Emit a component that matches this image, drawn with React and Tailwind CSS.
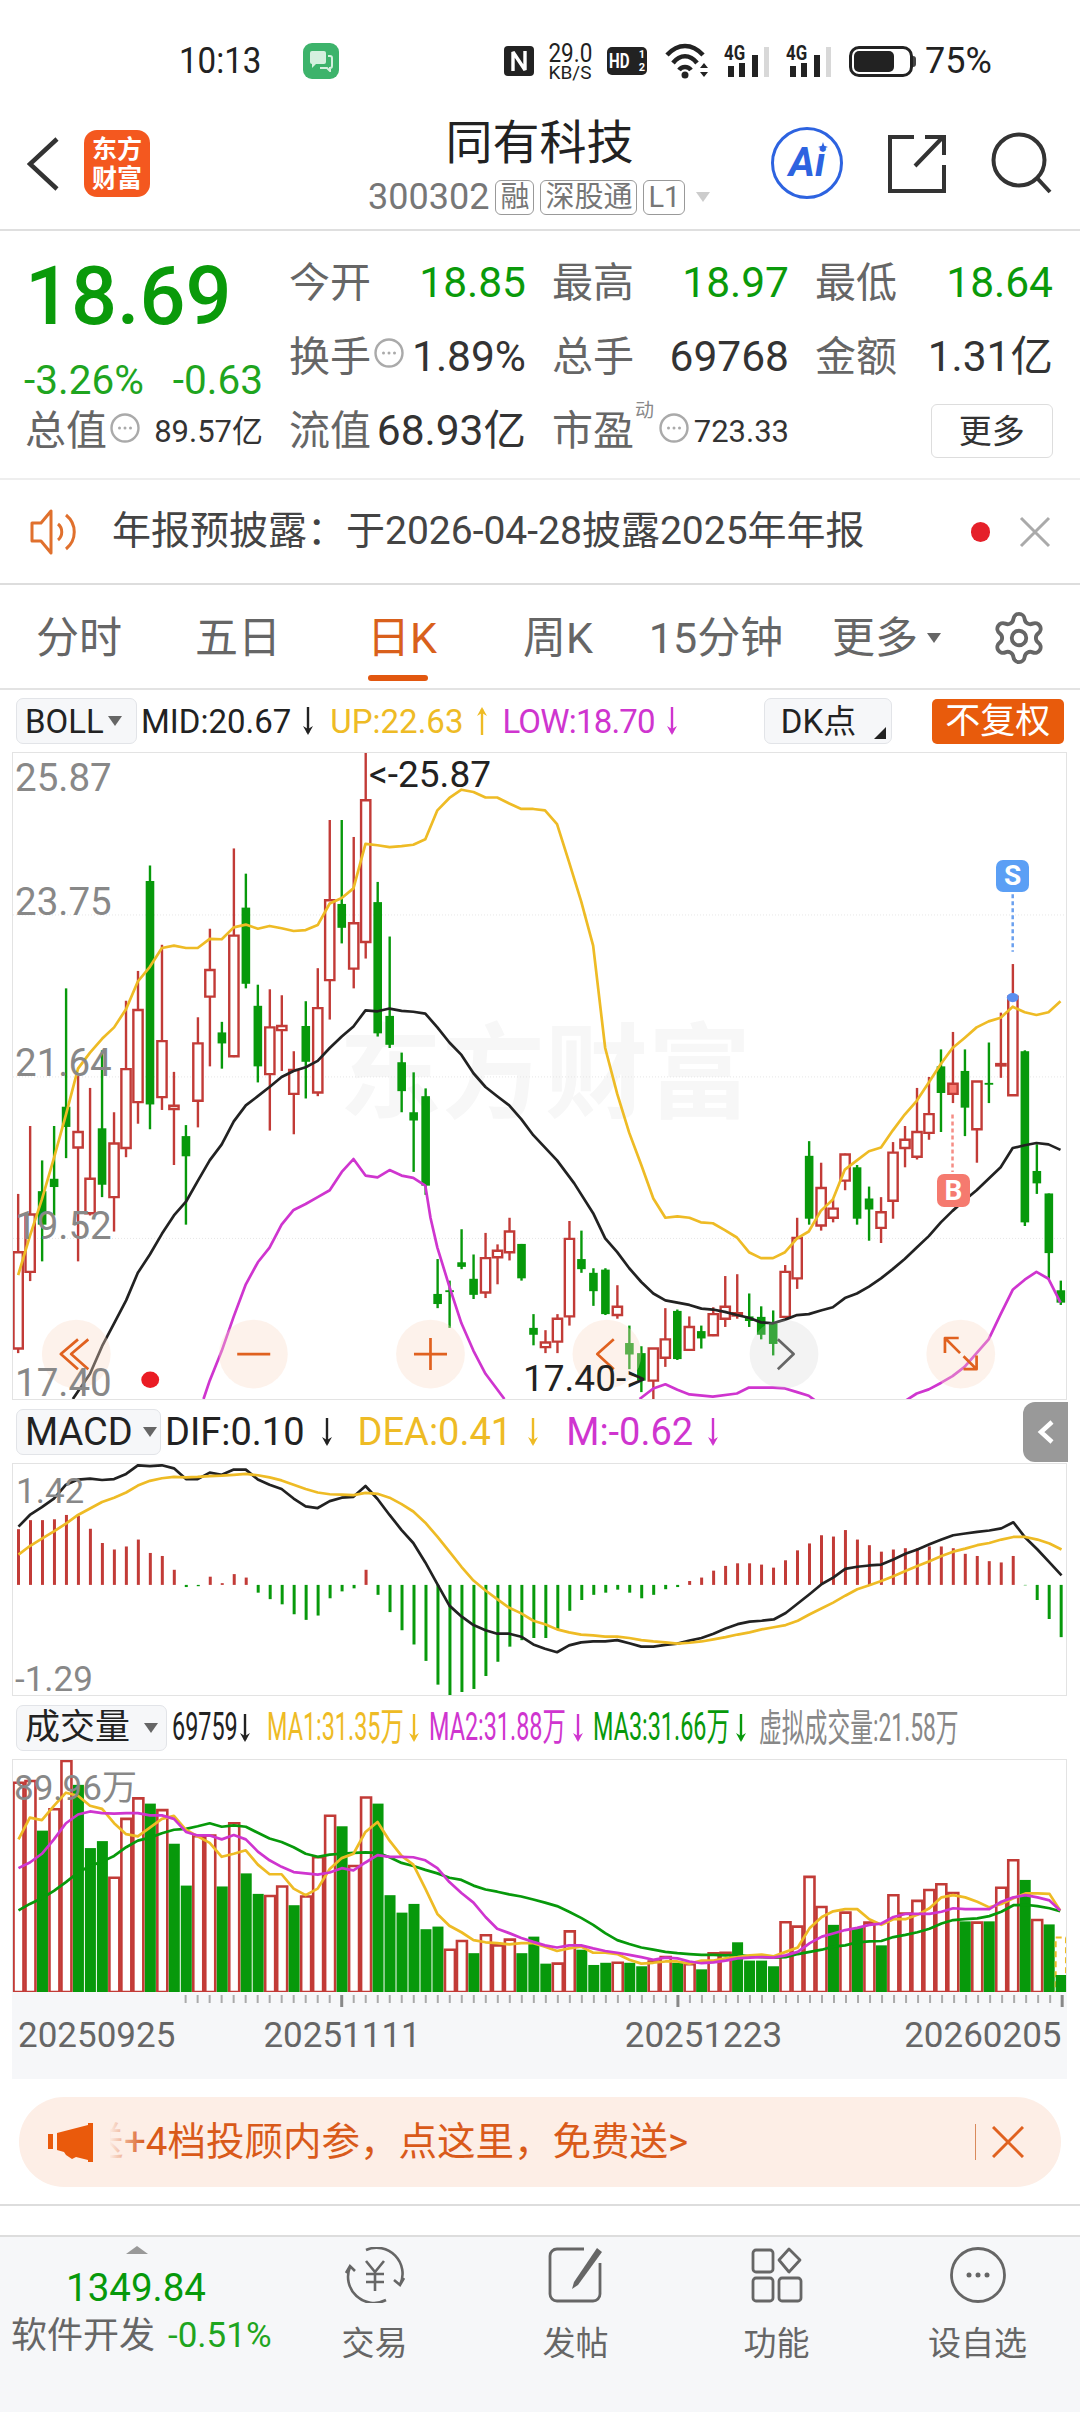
import React from 'react';
import { Settings } from 'lucide-react';

const GREEN = '#07990b';
const RED = '#c23b37';
const GOLD = '#eebb25';
const PINK = '#cf35cf';

// wick top, wick bottom, body top, body bottom, colour (y values measured on the chart)
const candles = [
  [1098, 1445, 1225, 1435, 'r'], [950, 1288, 1143, 1268, 'r'], [1025, 1245, 1092, 1165, 'g'], [950, 1145, 1065, 1083, 'g'],
  [650, 1020, 908, 952, 'g'], [840, 1245, 963, 997, 'r'], [867, 1145, 1065, 1140, 'r'], [785, 1105, 955, 1078, 'g'],
  [920, 1180, 988, 1105, 'r'], [677, 1018, 826, 998, 'r'], [612, 945, 697, 898, 'r'], [382, 957, 416, 903, 'g'],
  [555, 915, 765, 887, 'r'], [832, 1035, 906, 913, 'r'], [948, 1165, 972, 1016, 'g'], [713, 953, 770, 895, 'r'],
  [520, 820, 610, 668, 'r'], [723, 825, 746, 770, 'g'], [345, 800, 535, 798, 'r'], [400, 650, 474, 640, 'g'],
  [642, 855, 688, 820, 'g'], [652, 960, 735, 837, 'r'], [665, 830, 732, 741, 'r'], [787, 968, 828, 880, 'r'],
  [678, 890, 732, 810, 'g'], [606, 885, 693, 877, 'r'], [283, 718, 458, 632, 'r'], [283, 552, 466, 518, 'g'],
  [320, 650, 508, 607, 'r'], [137, 585, 240, 549, 'r'], [418, 755, 462, 748, 'g'], [537, 780, 710, 773, 'g'],
  [790, 920, 811, 874, 'g'], [833, 1050, 920, 938, 'g'], [868, 1100, 885, 1080, 'g'], [1240, 1347, 1316, 1338, 'g'],
  [1287, 1390, 1308, 1312, 'g'], [1175, 1262, 1247, 1257, 'g'], [1230, 1327, 1283, 1318, 'g'], [1183, 1325, 1238, 1313, 'r'],
  [1208, 1295, 1222, 1236, 'r'], [1150, 1243, 1180, 1225, 'r'], [1207, 1287, 1207, 1282, 'g'], [1360, 1428, 1390, 1405, 'g'],
  [1395, 1445, 1422, 1432, 'r'], [1360, 1445, 1370, 1420, 'r'], [1157, 1385, 1196, 1365, 'r'], [1178, 1270, 1240, 1262, 'g'],
  [1260, 1342, 1270, 1310, 'g'], [1260, 1362, 1263, 1360, 'g'], [1297, 1370, 1344, 1362, 'r'], [1385, 1480, 1423, 1448, 'g'],
  [1430, 1530, 1445, 1505, 'g'], [1435, 1545, 1435, 1505, 'r'], [1347, 1475, 1415, 1455, 'r'], [1350, 1460, 1353, 1458, 'g'],
  [1365, 1440, 1388, 1438, 'r'], [1385, 1435, 1397, 1413, 'g'], [1345, 1408, 1360, 1406, 'r'], [1277, 1388, 1344, 1370, 'r'],
  [1273, 1370, 1358, 1363, 'r'], [1315, 1388, 1365, 1375, 'g'], [1343, 1415, 1366, 1405, 'g'], [1352, 1450, 1380, 1425, 'g'],
  [1253, 1368, 1268, 1366, 'r'], [1150, 1305, 1194, 1282, 'r'], [983, 1165, 1015, 1152, 'g'], [1030, 1178, 1085, 1167, 'r'],
  [1110, 1160, 1130, 1150, 'r'], [1010, 1090, 1012, 1069, 'r'], [1035, 1165, 1040, 1152, 'g'], [1082, 1200, 1108, 1132, 'g'],
  [1105, 1205, 1138, 1172, 'r'], [985, 1152, 1008, 1113, 'r'], [950, 1040, 980, 998, 'r'], [867, 1023, 963, 1017, 'r'],
  [843, 980, 924, 965, 'r'], [783, 963, 820, 878, 'g'], [745, 900, 858, 880, 'b'], [783, 972, 830, 910, 'g'],
  [853, 1030, 853, 957, 'r'], [768, 900, 856, 860, 'g'], [703, 845, 815, 818, 'r'], [597, 883, 668, 883, 'r'],
  [785, 1168, 787, 1160, 'g'], [990, 1098, 1048, 1075, 'g'], [1097, 1285, 1097, 1227, 'g'], [1287, 1340, 1308, 1335, 'g'],
];

const bollUp = 'M51 1275L85 1190L120 1110L155 1020L190 925L225 825L260 790L295 760L330 735L365 695L399 635L434 603L469 562L504 557L539 562L573 562L608 542L643 543L678 517L713 511L748 520L782 514L817 519L852 525L887 523L922 512L957 465L992 453L1026 432L1061 335L1096 338L1131 342L1166 340L1200 337L1235 325L1270 262L1305 235L1340 217L1375 222L1410 234L1444 234L1479 247L1514 259L1549 259L1583 262L1618 292L1653 375L1688 460L1723 557L1758 780L1793 880L1828 965L1863 1035L1898 1108L1933 1150L1968 1147L2003 1150L2036 1160L2071 1162L2106 1177L2141 1193L2176 1225L2211 1238L2246 1238L2281 1225L2316 1195L2350 1180L2385 1135L2420 1110L2455 1045L2490 1025L2525 1005L2560 997L2594 960L2629 925L2664 895L2699 855L2734 815L2768 780L2803 758L2838 735L2873 722L2908 714L2943 690L2978 702L3012 708L3047 702L3082 678';
const bollMid = 'M210 1545L260 1490L295 1430L330 1380L365 1330L399 1270L434 1230L469 1185L504 1145L539 1115L573 1070L608 1025L643 990L678 940L713 905L748 885L782 865L817 843L852 830L887 822L922 808L957 780L992 755L1026 733L1061 698L1096 700L1131 694L1166 699L1200 701L1235 705L1270 735L1305 768L1340 795L1375 835L1410 865L1444 885L1479 905L1514 935L1549 970L1618 1025L1668 1075L1723 1140L1758 1195L1793 1225L1828 1260L1863 1290L1898 1315L1933 1330L2003 1340L2038 1348L2071 1350L2106 1355L2141 1362L2176 1368L2211 1378L2246 1380L2281 1372L2316 1362L2350 1360L2385 1352L2420 1345L2455 1325L2490 1315L2525 1300L2560 1282L2594 1262L2629 1240L2664 1215L2699 1190L2734 1160L2768 1135L2803 1112L2838 1090L2873 1065L2908 1040L2943 998L2978 992L3012 987L3047 990L3082 1002';
const bollLow = 'M590 1545L608 1505L643 1440L678 1365L713 1295L748 1247L782 1215L817 1165L852 1133L887 1120L922 1105L957 1090L992 1050L1026 1022L1061 1058L1096 1062L1131 1046L1166 1058L1200 1063L1235 1080L1250 1150L1270 1215L1305 1300L1340 1380L1375 1440L1410 1490L1465 1545M1858 1545L1898 1522L1933 1513L1968 1525L2003 1535L2071 1540L2141 1533L2176 1520L2246 1520L2281 1522L2316 1530L2350 1538L2368 1548M2633 1548L2664 1533L2699 1524L2734 1510L2768 1495L2803 1475L2838 1445L2873 1415L2908 1360L2943 1307L2978 1285L3012 1268L3047 1283L3082 1335';

const macdBars = [298, 277, 277, 275, 265, 267, 297, 330, 345, 338, 322, 353, 360, 392, 432, 430, 408, 423, 402, 410, 445, 460, 472, 495, 508, 498, 458, 442, 435, 392, 450, 490, 532, 565, 603, 658, 682, 675, 668, 638, 605, 570, 555, 550, 550, 530, 487, 462, 450, 445, 438, 445, 458, 450, 437, 432, 418, 410, 394, 383, 377, 377, 380, 387, 370, 347, 331, 312, 315, 300, 322, 335, 350, 345, 342, 342, 338, 338, 342, 355, 360, 372, 375, 360, 428, 462, 506, 548];
const macdDif = 'M52 292L85 265L120 247L155 227L190 195L225 183L260 181L295 184L330 182L365 170L399 150L434 152L469 150L504 157L539 182L573 182L608 167L643 172L678 160L713 160L748 183L782 195L817 205L852 227L887 245L922 249L957 233L992 225L1026 223L1061 198L1096 228L1131 265L1166 300L1200 330L1235 375L1270 425L1305 475L1340 500L1375 520L1410 532L1444 540L1479 540L1514 547L1549 565L1583 575L1618 583L1653 567L1688 560L1723 558L1758 558L1793 555L1828 562L1863 570L1898 570L1933 566L1968 563L2003 556L2038 550L2073 540L2108 528L2143 518L2178 512L2213 510L2248 507L2283 492L2318 470L2353 448L2388 425L2421 410L2456 390L2491 385L2526 382L2561 380L2596 368L2631 355L2666 345L2701 333L2736 322L2770 312L2805 308L2840 304L2875 301L2910 296L2945 282L2980 318L3015 345L3050 375L3085 405';
const macdDea = 'M52 357L85 337L120 320L155 303L190 285L225 265L260 250L295 235L330 225L365 213L399 197L434 186L469 180L504 177L539 178L573 177L608 175L643 174L678 172L713 170L748 173L782 178L817 185L852 195L887 205L922 213L957 217L992 218L1026 219L1061 214L1096 216L1131 225L1166 240L1200 257L1235 283L1270 315L1305 350L1340 385L1375 417L1410 440L1444 460L1479 480L1514 493L1549 510L1583 518L1618 530L1653 537L1688 542L1723 544L1758 547L1793 547L1828 550L1863 555L1898 558L1933 560L1968 563L2003 561L2038 558L2073 553L2108 548L2143 542L2178 537L2213 530L2248 525L2283 520L2318 510L2353 495L2388 481L2421 468L2456 452L2491 437L2526 428L2561 418L2596 407L2631 395L2666 383L2701 372L2736 360L2770 350L2805 343L2840 335L2875 330L2910 322L2945 316L2980 316L3015 322L3050 331L3085 345';

const volumes = [
  [882, 'r'], [878, 'r'], [992, 'g'], [943, 'r'], [832, 'r'], [887, 'g'], [1032, 'g'], [1016, 'g'], [1100, 'r'], [965, 'r'], [918, 'r'],
  [930, 'g'], [945, 'r'], [1022, 'g'], [1118, 'g'], [1005, 'r'], [1003, 'r'], [1120, 'g'], [975, 'r'], [1090, 'g'], [1137, 'g'], [1142, 'r'],
  [1120, 'r'], [1163, 'g'], [1143, 'r'], [1053, 'r'], [958, 'r'], [982, 'g'], [1073, 'r'], [916, 'r'], [930, 'g'], [1140, 'g'], [1180, 'g'],
  [1160, 'g'], [1218, 'g'], [1212, 'g'], [1265, 'r'], [1245, 'r'], [1273, 'g'], [1232, 'r'], [1255, 'r'], [1242, 'r'], [1273, 'g'], [1235, 'g'],
  [1297, 'g'], [1297, 'r'], [1223, 'r'], [1265, 'g'], [1300, 'g'], [1295, 'g'], [1295, 'r'], [1295, 'g'], [1303, 'g'], [1292, 'r'], [1282, 'r'],
  [1295, 'g'], [1298, 'r'], [1310, 'g'], [1273, 'r'], [1272, 'r'], [1248, 'g'], [1290, 'g'], [1290, 'g'], [1303, 'g'], [1202, 'r'], [1212, 'r'],
  [1098, 'r'], [1167, 'r'], [1208, 'g'], [1180, 'r'], [1215, 'g'], [1203, 'r'], [1255, 'g'], [1140, 'r'], [1182, 'r'], [1153, 'r'], [1128, 'r'],
  [1115, 'r'], [1135, 'r'], [1200, 'g'], [1203, 'r'], [1200, 'g'], [1123, 'r'], [1060, 'r'], [1105, 'g'], [1197, 'r'], [1207, 'g'], [1323, 'g'],
];
const volMa1 = 'M52 1012L85 962L120 968L155 935L190 905L225 912L260 935L295 942L330 975L365 1000L399 1005L434 985L469 965L504 958L539 990L573 1005L608 1020L643 1052L678 1045L713 1037L748 1070L782 1092L817 1092L852 1125L887 1140L922 1125L957 1080L992 1055L1026 1045L1061 995L1096 972L1131 1015L1166 1050L1200 1070L1235 1125L1270 1183L1305 1210L1340 1225L1375 1243L1410 1248L1444 1250L1479 1253L1514 1250L1549 1250L1583 1258L1618 1268L1653 1262L1688 1258L1723 1272L1758 1272L1793 1275L1828 1288L1863 1297L1898 1295L1933 1292L1968 1292L2003 1297L2038 1290L2073 1290L2108 1285L2143 1282L2178 1278L2213 1276L2248 1280L2283 1270L2318 1260L2353 1215L2388 1190L2421 1177L2456 1172L2491 1172L2526 1195L2561 1208L2596 1195L2631 1195L2666 1185L2701 1170L2736 1145L2770 1140L2805 1145L2840 1155L2875 1168L2910 1160L2945 1147L2980 1136L3015 1136L3050 1137L3081 1175';
const volMa2 = 'M52 1078L85 1065L120 1045L155 1012L190 975L225 955L260 948L295 952L330 953L365 952L399 952L434 957L469 957L504 965L539 995L573 1003L608 1003L643 1012L678 1002L713 1012L748 1040L782 1060L817 1075L852 1087L887 1090L922 1093L957 1088L992 1078L1026 1083L1061 1065L1096 1048L1131 1052L1166 1052L1200 1053L1235 1060L1270 1078L1305 1110L1340 1135L1375 1157L1410 1190L1444 1217L1479 1227L1514 1238L1549 1247L1583 1255L1618 1260L1653 1255L1688 1255L1723 1262L1758 1268L1793 1272L1828 1277L1863 1282L1898 1288L1933 1283L1968 1285L2003 1292L2038 1296L2073 1294L2108 1290L2143 1285L2178 1283L2213 1282L2248 1283L2283 1278L2318 1270L2353 1250L2388 1235L2421 1228L2456 1220L2491 1215L2526 1208L2561 1205L2596 1190L2631 1183L2666 1183L2701 1183L2736 1178L2770 1170L2805 1172L2840 1172L2875 1172L2910 1155L2945 1145L2980 1140L3015 1145L3050 1152L3081 1175';
const volMa3 = 'M52 1175L85 1160L120 1147L155 1130L190 1110L225 1088L260 1073L295 1063L330 1050L365 1030L399 1015L434 1008L469 998L504 990L539 988L573 982L608 975L643 983L678 980L713 983L748 997L782 1010L817 1018L852 1030L887 1045L922 1052L957 1047L992 1045L1026 1043L1061 1042L1096 1043L1131 1053L1166 1066L1200 1073L1235 1082L1270 1090L1305 1100L1340 1105L1375 1118L1410 1127L1444 1132L1479 1138L1514 1143L1549 1150L1583 1157L1618 1165L1653 1178L1688 1192L1723 1208L1758 1227L1793 1243L1828 1252L1863 1260L1898 1265L1933 1270L1968 1273L2003 1275L2038 1277L2073 1277L2108 1278L2143 1277L2178 1280L2213 1282L2248 1283L2283 1282L2318 1275L2353 1270L2388 1265L2421 1258L2456 1255L2491 1248L2526 1246L2561 1245L2596 1236L2631 1231L2666 1225L2701 1217L2736 1205L2770 1197L2805 1195L2840 1193L2875 1188L2910 1178L2945 1163L2980 1162L3015 1165L3050 1170L3081 1177';

const Trace = ({ d, color, width = 2.7 }) => (
  <path d={d} fill="none" stroke={color} strokeWidth={width} strokeLinejoin="round" vectorEffect="non-scaling-stroke" />
);

const Seg = ({ x1, y1, x2, y2, color, width = 2.4, dash }) => (
  <line x1={x1} y1={y1} x2={x2} y2={y2} stroke={color} strokeWidth={width} strokeDasharray={dash} vectorEffect="non-scaling-stroke" />
);

const Arrow = ({ color }) => (
  <svg width="12" height="30" viewBox="0 0 12 30" className="shrink-0">
    <path d="M6 1V27" stroke={color} strokeWidth="2.4" />
    <path d="M1 20L6 29L11 20L6 23Z" fill={color} />
  </svg>
);

const UpArrow = ({ color }) => (
  <svg width="12" height="30" viewBox="0 0 12 30" className="shrink-0">
    <path d="M6 3V29" stroke={color} strokeWidth="2.4" />
    <path d="M1 10L6 1L11 10L6 7Z" fill={color} />
  </svg>
);

const Caret = ({ color = '#666' }) => (
  <svg width="14" height="10" viewBox="0 0 14 10" className="shrink-0">
    <path d="M0 0H14L7 10Z" fill={color} />
  </svg>
);

const MoreDot = ({ size = 30 }) => (
  <svg width={size} height={size} viewBox="0 0 30 30" className="shrink-0 -translate-y-[4px]">
    <circle cx="15" cy="15" r="13.5" fill="none" stroke="#aaa" strokeWidth="2.4" />
    <circle cx="9.5" cy="15" r="1.5" fill="#aaa" />
    <circle cx="15" cy="15" r="1.5" fill="#aaa" />
    <circle cx="20.5" cy="15" r="1.5" fill="#aaa" />
  </svg>
);

const Signal = () => (
  <div className="relative w-[47px] h-[32px]">
    <span className="absolute left-0 top-[-1px] text-[21px] font-bold leading-[18px] text-[#222] origin-left scale-x-[.8]">4G</span>
    <svg width="47" height="32" viewBox="0 0 47 32" className="absolute inset-0">
      <rect x="4" y="21" width="6" height="11" fill="#222" />
      <rect x="15" y="18" width="6" height="14" fill="#222" />
      <rect x="28" y="10" width="6" height="22" fill="#222" />
      <rect x="40" y="2" width="5" height="30" fill="#d8d8d8" />
    </svg>
  </div>
);

const StatusBar = () => (
  <div className="h-[100px] pt-[22px] flex items-center pl-[179px] text-[#222]">
    <span className="text-[36px] w-[124px] origin-left scale-x-[.92]">10:13</span>
    <div className="w-[36px] h-[36px] rounded-[9px] bg-[#3db36b] flex items-center justify-center">
      <svg width="24" height="22" viewBox="0 0 24 22">
        <path d="M1 3a2 2 0 0 1 2-2h12a2 2 0 0 1 2 2v9a2 2 0 0 1-2 2H7l-4 4v-4a2 2 0 0 1-2-2Z" fill="#d5f0df" />
        <path d="M19 6h2a2 2 0 0 1 2 2v8a2 2 0 0 1-2 2v3l-3-3h-7" fill="none" stroke="#d5f0df" strokeWidth="2" />
      </svg>
    </div>
    <svg width="30" height="30" viewBox="0 0 30 30" className="ml-[165px] shrink-0">
      <rect width="30" height="30" rx="4" fill="#222" />
      <path d="M9 25V6L21 24V5" fill="none" stroke="#fff" strokeWidth="3.4" strokeLinejoin="bevel" />
    </svg>
    <div className="ml-[12px] w-[48px] flex flex-col items-center leading-none">
      <span className="text-[25px] leading-[20px] mt-[2px] origin-center scale-x-[.9]">29.0</span>
      <span className="text-[19px] leading-[16px] mt-[1px] origin-center whitespace-nowrap">KB/S</span>
    </div>
    <div className="ml-[13px] w-[40px] h-[28px] bg-[#222] rounded-[5px] flex items-center pl-[2px] text-white font-bold leading-none relative">
      <span className="text-[21px] origin-left scale-x-[.72] inline-block">HD</span>
      <span className="absolute right-[2px] top-[1px] text-[11px] leading-[13px] flex flex-col items-center"><span>1</span><span>2</span></span>
    </div>
    <svg width="46" height="36" viewBox="0 0 46 36" className="ml-[18px]">
      <path d="M2 12C13 0 27 0 38 12M8 20C15 11 25 11 32 20M14 27C17 23 23 23 26 27" fill="none" stroke="#222" strokeWidth="4.5" />
      <circle cx="20" cy="32" r="3.5" fill="#222" />
      <path d="M39 20l-4 5h8ZM39 34l-4-5h8Z" fill="#222" />
    </svg>
    <div className="ml-[13px]"><Signal /></div>
    <div className="ml-[15px]"><Signal /></div>
    <div className="ml-[16px] relative w-[67px] h-[31px]">
      <div className="w-[64px] h-[31px] border-[3px] border-[#222] rounded-[10px] p-[2px]">
        <div className="w-[40px] h-full bg-[#222] rounded-[5px]" />
      </div>
      <div className="absolute right-0 top-[10px] w-[3px] h-[11px] bg-[#444] rounded-r" />
    </div>
    <span className="ml-[9px] text-[36px]">75%</span>
  </div>
);

const Tag = ({ children }) => (
  <span className="h-[35px] px-[4px] border border-[#999] rounded-[6px] text-[#777] text-[29px] leading-[31px] flex items-center">{children}</span>
);

const NavBar = () => (
  <div className="h-[131px] border-b-2 border-[#dfdfdf] relative flex items-start">
    <svg width="32" height="54" viewBox="0 0 32 54" className="ml-[27px] mt-[37px]">
      <path d="M30 2L3 27L30 52" fill="none" stroke="#333" strokeWidth="4.5" />
    </svg>
    <div className="ml-[25px] mt-[30px] w-[66px] h-[67px] rounded-[13px] bg-[#f4581f] text-white font-bold text-[25px] leading-[29px] flex flex-col items-center justify-center">
      <span>东方</span>
      <span>财富</span>
    </div>
    <div className="absolute left-[368px] top-[12px] w-[345px] flex flex-col">
      <span className="self-center text-[47px] leading-[62px] text-[#222] -translate-x-[1px]">同有科技</span>
      <div className="flex items-center gap-[6px] mt-[3px]">
        <span className="text-[36px] leading-[40px] text-[#777]">300302</span>
        <Tag>融</Tag>
        <Tag>深股通</Tag>
        <Tag>L1</Tag>
        <div className="ml-[5px]"><Caret color="#ccc" /></div>
      </div>
    </div>
    <div className="absolute left-[771px] top-[27px] w-[72px] h-[72px] rounded-full border-[3.5px] border-[#2d63e0] flex items-center justify-center text-[#2d63e0] font-bold italic text-[40px] leading-none">
      Ai
      <svg width="10" height="10" viewBox="0 0 10 10" className="absolute right-[12px] top-[12px]">
        <path d="M5 0L6.2 3.8L10 5L6.2 6.2L5 10L3.8 6.2L0 5L3.8 3.8Z" fill="#2d63e0" />
      </svg>
    </div>
    <svg width="58" height="60" viewBox="0 0 58 60" className="absolute left-[888px] top-[34px]">
      <path d="M26 3H2V57H56V31" fill="none" stroke="#333" strokeWidth="4" />
      <path d="M27 32L55 3M37 3H56V21" fill="none" stroke="#333" strokeWidth="4" />
    </svg>
    <svg width="62" height="62" viewBox="0 0 62 62" className="absolute left-[991px] top-[32px]">
      <circle cx="28" cy="28" r="25.5" fill="none" stroke="#333" strokeWidth="4" />
      <path d="M46 46L59 60" stroke="#333" strokeWidth="4" />
    </svg>
  </div>
);

const Stat = ({ label, value, tone = 'text-[#333]', icon, small, pull }) => (
  <div className={`flex items-center justify-between ${pull ? '-ml-[2px]' : ''}`}>
    <div className="flex items-center">
      <span className="text-[41px] text-[#666] whitespace-nowrap">{label}</span>
      {icon && <div className="ml-[3px]"><MoreDot /></div>}
    </div>
    <span className={`whitespace-nowrap ${small ? 'text-[31px]' : 'text-[42.5px]'} ${tone}`}>{value}</span>
  </div>
);

const StatsBlock = () => (
  <div className="h-[249px] border-b-2 border-[#eeeeee] pt-[15px] pl-[27px] grid grid-cols-[236px_237px_237px_238px] gap-x-[26px] grid-rows-[74px_74px_75px] items-center leading-none">
    <div className="row-span-2 h-[148px] relative">
      <span className="block mt-[10px] text-[81px] font-medium leading-[82px] text-[#0a9a0a] -ml-[2px]">18.69</span>
      <div className="flex justify-between text-[40.5px] leading-[38px] mt-[23px] -ml-[3px] text-[#1fa51f]">
        <span>-3.26%</span>
        <span>-0.63</span>
      </div>
    </div>
    <Stat label="今开" value="18.85" tone="text-[#0a9a0a]" />
    <Stat label="最高" value="18.97" tone="text-[#0a9a0a]" />
    <Stat label="最低" value="18.64" tone="text-[#0a9a0a]" />
    <Stat label="换手" value="1.89%" icon />
    <Stat label="总手" value="69768" />
    <Stat label="金额" value="1.31亿" />
    <Stat label="总值" value="89.57亿" icon small pull />
    <Stat label="流值" value="68.93亿" />
    <div className="flex items-center relative">
      <span className="text-[41px] text-[#666]">市盈</span>
      <span className="absolute left-[83px] -top-[10px] text-[19px] text-[#888]">动</span>
      <div className="ml-[25px]"><MoreDot /></div>
      <span className="ml-auto text-[31px] text-[#333]">723.33</span>
    </div>
    <div className="flex items-center justify-between">
      <div className="w-[116px]" />
      <div className="w-[123px] h-[54px] border border-[#ddd] rounded-[6px] flex items-center justify-center text-[33px] text-[#333] -mt-[1px]">更多</div>
    </div>
  </div>
);

const NoticeBar = () => (
  <div className="h-[105px] border-b-2 border-[#dddddd] flex items-center pl-[30px] relative">
    <svg width="50" height="48" viewBox="0 0 50 48" className="shrink-0">
      <path d="M2 15H11L21 3V45L11 33H2Z" fill="none" stroke="#e0702d" strokeWidth="3" strokeLinejoin="round" />
      <path d="M28 16C33 20 33 28 28 32M36 7C47 16 47 32 36 41" fill="none" stroke="#e0702d" strokeWidth="3" />
    </svg>
    <span className="ml-[32px] text-[39px] text-[#444] whitespace-nowrap">年报预披露：于2026-04-28披露2025年年报</span>
    <div className="absolute left-[971px] w-[19px] h-[20px] rounded-full bg-[#e5202a]" />
    <svg width="32" height="32" viewBox="0 0 32 32" className="absolute left-[1019px]">
      <path d="M2 2L30 30M30 2L2 30" stroke="#aaa" strokeWidth="3" />
    </svg>
  </div>
);

const TabBar = () => {
  const tabs = [
    ['分时', 'w-[158px]'],
    ['五日', 'w-[160px]'],
    ['日K', 'w-[168px]', true],
    ['周K', 'w-[144px]'],
    ['15分钟', 'w-[172px]'],
  ];
  return (
    <div className="h-[105px] pt-[3px] border-b-2 border-[#e3e3e3] flex text-[43px] text-[#666] leading-none">
      {tabs.map(([name, w, on]) => (
        <div key={name} className={`${w} h-full flex items-center justify-center relative`}>
          <span className={`whitespace-nowrap ${on ? 'text-[#d9601c]' : ''}`}>{name}</span>
          {on && <div className="absolute bottom-[7px] left-[50px] w-[60px] h-[6px] rounded-full bg-[#e2570f]" />}
        </div>
      ))}
      <div className="w-[174px] h-full flex items-center pl-[30px] gap-[9px]">
        <span className="whitespace-nowrap">更多</span>
        <Caret />
      </div>
      <div className="h-full flex items-center ml-[14px]">
        <Settings size={58} strokeWidth={1.6} color="#666" />
      </div>
    </div>
  );
};

const SelectBox = ({ label, wide, children }) => (
  <div className={`${wide} h-[46px] bg-[#f6f7f9] border border-[#e2e4e8] rounded-[7px] flex items-center pl-[8px] text-[#222] leading-none shrink-0`}>
    <span className="whitespace-nowrap">{label}</span>
    {children}
  </div>
);

const BollHeader = () => (
  <div className="h-[62px] flex items-center pl-[16px] text-[33px] leading-none whitespace-nowrap">
    <SelectBox label="BOLL" wide="w-[121px]">
      <div className="ml-[4px]"><Caret /></div>
    </SelectBox>
    <span className="ml-[4px] text-[#222]">MID:20.67</span>
    <div className="ml-[11px]"><Arrow color="#222" /></div>
    <span className="ml-[16px] text-[#eebb25]">UP:22.63</span>
    <div className="ml-[13px]"><UpArrow color="#eebb25" /></div>
    <span className="ml-[14px] text-[#cf35cf] tracking-[-0.8px]">LOW:18.70</span>
    <div className="ml-[11px]"><Arrow color="#cf35cf" /></div>
    <div className="ml-[86px] w-[128px] h-[46px] bg-[#f6f7f9] border border-[#e2e4e8] rounded-[7px] flex items-center pl-[16px] text-[33px] text-[#222] relative">
      DK点
      <svg width="12" height="12" viewBox="0 0 12 12" className="absolute right-[5px] bottom-[4px]">
        <path d="M12 0V12H0Z" fill="#222" />
      </svg>
    </div>
    <div className="ml-[40px] w-[132px] h-[45px] bg-[#e85b0c] rounded-[5px] flex items-center justify-center text-white text-[35px]">不复权</div>
  </div>
);

const AxisText = ({ className, children }) => (
  <span className={`absolute leading-none whitespace-nowrap ${className}`}>{children}</span>
);

const MainChart = () => {
  const peach = '#fad9c5';
  const orange = '#e0611f';
  return (
    <div className="relative ml-[12px] w-[1055px] h-[648px] border border-[#e3e3e3] overflow-hidden">
      <span className="absolute left-[326px] top-[262px] text-[103px] font-bold text-[#f7f7f7] leading-[120px] whitespace-nowrap">东方财富</span>
      <svg viewBox="36 137 3062 1408" preserveAspectRatio="none" className="absolute inset-0 w-full h-full">
        <Seg x1={36} y1={490} x2={3098} y2={490} color="#e6e6e6" dash="1 2" width={1} />
        <Seg x1={36} y1={843} x2={3098} y2={843} color="#e6e6e6" dash="1 2" width={1} />
        <Seg x1={36} y1={1195} x2={3098} y2={1195} color="#e6e6e6" dash="1 2" width={1} />
        {candles.map(([wt, wb, bt, bb, c], i) => {
          const x = 51 + 34.85 * i;
          if (c === 'g') {
            return (
              <g key={i}>
                <Seg x1={x} y1={wt} x2={x} y2={wb} color={GREEN} />
                <rect x={x - 12.5} y={bt} width={25} height={Math.max(bb - bt, 4)} fill={GREEN} />
              </g>
            );
          }
          return (
            <g key={i}>
              <Seg x1={x} y1={wt} x2={x} y2={wb} color={RED} />
              <rect x={x - 13.5} y={bt} width={27} height={bb - bt} fill={c === 'b' ? '#f87a70' : '#fff'} stroke={RED} strokeWidth={2.4} vectorEffect="non-scaling-stroke" />
            </g>
          );
        })}
        <ellipse cx={2943} cy={670} rx={17} ry={10} fill="#5b8ff0" />
        <Seg x1={2943} y1={445} x2={2943} y2={570} color="#6aa0ef" dash="4 3" width={2.5} />
        <Seg x1={2768} y1={925} x2={2768} y2={1050} color="#f58d85" dash="4 3" width={2.5} />
        <Trace d={bollMid} color="#222" />
        <Trace d={bollUp} color={GOLD} />
        <Trace d={bollLow} color={PINK} />
        <ellipse cx={435} cy={1503} rx={26} ry={18} fill="#ea1c24" />
        <ellipse cx={220} cy={1447} rx={100} ry={75} fill={peach} fillOpacity="0.35" />
        <ellipse cx={735} cy={1447} rx={100} ry={75} fill={peach} fillOpacity="0.35" />
        <ellipse cx={1250} cy={1447} rx={100} ry={75} fill={peach} fillOpacity="0.35" />
        <ellipse cx={1763} cy={1447} rx={100} ry={75} fill={peach} fillOpacity="0.35" />
        <ellipse cx={2278} cy={1447} rx={100} ry={75} fill="#cfcfcf" fillOpacity="0.25" />
        <ellipse cx={2792} cy={1447} rx={100} ry={75} fill={peach} fillOpacity="0.35" />
        <Trace d="M225 1415L175 1447L225 1480M255 1415L205 1447L255 1480" color={orange} />
        <Trace d="M688 1447H784" color={orange} />
        <Trace d="M1202 1447H1298M1250 1412V1482" color={orange} />
        <Trace d="M1783 1415L1735 1447L1783 1480" color={orange} />
        <Trace d="M2260 1415L2306 1447L2260 1480" color="#666" />
        <Trace d="M2746 1445V1412H2786M2746 1412L2790 1445M2838 1450V1480H2800M2838 1480L2800 1452" color={orange} />
      </svg>
      <AxisText className="left-[2px] top-[6px] text-[38.5px] text-[#888]">25.87</AxisText>
      <AxisText className="left-[2px] top-[130px] text-[38.5px] text-[#888]">23.75</AxisText>
      <AxisText className="left-[2px] top-[291px] text-[38.5px] text-[#888]">21.64</AxisText>
      <AxisText className="left-[2px] top-[454px] text-[38.5px] text-[#888]">19.52</AxisText>
      <AxisText className="left-[2px] top-[611px] text-[38.5px] text-[#888]">17.40</AxisText>
      <AxisText className="left-[356px] top-[3px] text-[37px] text-[#222]">{'<-25.87'}</AxisText>
      <AxisText className="left-[510px] top-[607px] text-[37px] text-[#222]">{'17.40->'}</AxisText>
      <div className="absolute left-[983px] top-[107px] w-[33px] h-[32px] rounded-[7px] bg-[#5b9ff5] flex items-center justify-center text-white font-bold text-[28px] leading-none">S</div>
      <div className="absolute left-[924px] top-[421px] w-[33px] h-[33px] rounded-[7px] bg-[#f57a6f] flex items-center justify-center text-white font-bold text-[28px] leading-none">B</div>
    </div>
  );
};

const MacdHeader = () => (
  <div className="h-[63px] flex items-center pl-[16px] text-[38px] leading-none whitespace-nowrap relative">
    <SelectBox label="MACD" wide="w-[145px]">
      <div className="ml-[10px]"><Caret /></div>
    </SelectBox>
    <span className="ml-[4px] text-[#222]">DIF:0.10</span>
    <div className="ml-[16px]"><Arrow color="#222" /></div>
    <span className="ml-[25px] text-[#eebb25]">DEA:0.41</span>
    <div className="ml-[15px]"><Arrow color="#eebb25" /></div>
    <span className="ml-[27px] text-[#cf35cf]">M:-0.62</span>
    <div className="ml-[14px]"><Arrow color="#cf35cf" /></div>
    <div className="absolute left-[1023px] top-[2px] w-[45px] h-[60px] bg-[#999] rounded-l-[12px] flex items-center justify-center">
      <svg width="18" height="26" viewBox="0 0 18 26">
        <path d="M15 3L4 13L15 23" fill="none" stroke="#fff" strokeWidth="4.5" />
      </svg>
    </div>
  </div>
);

const MacdChart = () => (
  <div className="relative ml-[12px] w-[1055px] h-[233px] border border-[#e3e3e3] overflow-hidden">
    <svg viewBox="36 147 3062 535" preserveAspectRatio="none" className="absolute inset-0 w-full h-full">
      {macdBars.map((y, i) => {
        const x = 52 + 34.85 * i;
        return <Seg key={i} x1={x} y1={427} x2={x} y2={y} color={y < 427 ? RED : GREEN} width={3} />;
      })}
      <Trace d={macdDif} color="#222" />
      <Trace d={macdDea} color={GOLD} />
    </svg>
    <AxisText className="left-[3px] top-[10px] text-[35px] text-[#888]">1.42</AxisText>
    <AxisText className="left-[2px] top-[198px] text-[35px] text-[#888]">-1.29</AxisText>
  </div>
);

// this row is drawn narrow in the app
const Narrow = ({ w, className, children }) => (
  <div className={`${w} shrink-0 h-[40px] flex items-center`}>
    <span className={`inline-block origin-left scale-x-[.6] leading-none whitespace-nowrap ${className}`}>{children}</span>
  </div>
);

const VolumeHeader = () => (
  <div className="h-[63px] flex items-center pl-[16px] text-[35px] leading-none whitespace-nowrap">
    <SelectBox label="成交量" wide="w-[151px]">
      <div className="ml-[14px]"><Caret /></div>
    </SelectBox>
    <Narrow w="ml-[5px] w-[67px]" className="text-[39px] text-[#222]">69759</Narrow>
    <Arrow color="#222" />
    <Narrow w="ml-[16px] w-[141px]" className="text-[39px] text-[#eebb25]">MA1:31.35万</Narrow>
    <Arrow color="#eebb25" />
    <Narrow w="ml-[9px] w-[143px]" className="text-[39px] text-[#cf35cf]">MA2:31.88万</Narrow>
    <Arrow color="#cf35cf" />
    <Narrow w="ml-[9px] w-[142px]" className="text-[39px] text-[#07990b]">MA3:31.66万</Narrow>
    <Arrow color="#07990b" />
    <Narrow w="ml-[12px] w-[200px]" className="text-[38px] text-[#888]">虚拟成交量:21.58万</Narrow>
  </div>
);

const VolumeChart = () => (
  <div className="relative ml-[12px] w-[1055px] h-[233px] border-x border-t border-[#e3e3e3] overflow-hidden">
    <svg viewBox="36 830 3062 532" preserveAspectRatio="none" className="absolute inset-0 w-full h-full">
      {volumes.map(([top, c], i) => {
        const x = 52 + 34.85 * i;
        if (i === 87) {
          return (
            <g key={i}>
              <rect x={x - 16} y={1237} width={30} height={125} fill="#fff" stroke={GOLD} strokeDasharray="6 4" strokeWidth={2} vectorEffect="non-scaling-stroke" />
              <rect x={x - 16} y={top} width={32} height={1362 - top} fill={GREEN} />
            </g>
          );
        }
        if (c === 'g') return <rect key={i} x={x - 16} y={top} width={32} height={1362 - top} fill={GREEN} />;
        return <rect key={i} x={x - 14.5} y={top} width={29} height={1362 - top} fill="#fff" stroke={RED} strokeWidth={2.6} vectorEffect="non-scaling-stroke" />;
      })}
      <Trace d={volMa3} color={GREEN} />
      <Trace d={volMa1} color={GOLD} />
      <Trace d={volMa2} color={PINK} />
    </svg>
    <AxisText className="left-[1px] top-[11px] text-[35px] text-[#888]">89.96万</AxisText>
  </div>
);

const DateStrip = () => (
  <div className="ml-[12px] w-[1055px] h-[87px] bg-[#f6f7f9] text-[35px] text-[#666] leading-none">
    <svg viewBox="36 0 3062 12" preserveAspectRatio="none" className="block w-full h-[12px] translate-y-[3px]">
      {candles.map((_, i) => {
        if (i < 14) return null;
        const x = 52 + 34.85 * i;
        const major = i === 27 || i === 55 || i === 87;
        return <Seg key={i} x1={x} y1={0} x2={x} y2={major ? 12 : 8} color={major ? '#888' : '#aaa'} width={major ? 3 : 2} />;
      })}
    </svg>
    <div className="flex pl-[6px] mt-[14px]">
      <span>20250925</span>
      <span className="ml-[88px]">20251111</span>
      <span className="ml-[204px]">20251223</span>
      <span className="ml-[122px]">20260205</span>
    </div>
  </div>
);

const PromoBanner = () => (
  <div className="mt-[18px] ml-[19px] w-[1042px] h-[90px] rounded-full bg-[#fdeee6] flex items-center relative">
    <svg width="45" height="41" viewBox="0 0 45 41" className="ml-[29px] shrink-0">
      <path d="M0 12H5V27H0ZM9 11L40 3V1H45V40H40V38L28 35L24 37L18 33L16 30L9 28Z" fill="#ea5a0c" />
    </svg>
    <div className="ml-[17px] w-[14px] h-[44px] overflow-hidden shrink-0">
      <span className="block -ml-[25px] text-[38.5px] leading-[44px] text-[#d95a1a] whitespace-nowrap">送</span>
    </div>
    <span className="text-[38.5px] text-[#d95a1a] whitespace-nowrap">+4档投顾内参，点这里，免费送&gt;</span>
    <div className="absolute left-[90px] top-[20px] w-[36px] h-[50px] bg-linear-to-r from-[#fdeee6] to-transparent" />
    <div className="absolute left-[956px] top-[27px] w-px h-[36px] bg-[#d98a5c]" />
    <svg width="32" height="32" viewBox="0 0 32 32" className="absolute left-[973px] top-[29px]">
      <path d="M1 1L31 31M31 1L1 31" stroke="#e0611f" strokeWidth="3" />
    </svg>
  </div>
);

const NavIcon = ({ label, children }) => (
  <div className="w-[201px] flex flex-col items-center">
    <div className="h-[56px] flex items-center justify-center">{children}</div>
    <span className="mt-[22px] text-[33px] leading-[38px] text-[#666]">{label}</span>
  </div>
);

const BottomNav = () => (
  <div className="mt-[29px] flex-1 border-t-2 border-[#dddddd] bg-[#f6f7f9] flex items-start">
    <div className="w-[274px] shrink-0 flex flex-col items-center relative">
      <svg width="22" height="8" viewBox="0 0 22 8" className="mt-[9px]">
        <path d="M0 8L11 0L22 8Z" fill="#999" />
      </svg>
      <span className="mt-[12px] text-[38.5px] leading-[44px] text-[#07990b] -ml-[2px]">1349.84</span>
      <div className="absolute left-[11px] top-[77px] flex items-center whitespace-nowrap">
        <span className="text-[36px] leading-[44px] text-[#666]">软件开发</span>
        <span className="ml-[13px] text-[35px] leading-[44px] text-[#1fa51f]">-0.51%</span>
      </div>
    </div>
    <div className="flex pt-[10px]">
      <NavIcon label="交易">
        <svg width="66" height="56" viewBox="0 0 66 56" fill="none" stroke="#666" strokeWidth="2.6">
          <path d="M24 3A26 26 0 0 1 58 38M62 31L58 38L52 33" />
          <path d="M44 53A26 26 0 0 1 8 20M4 26L8 19L13 24" />
          <path d="M24 14L33 25L42 14M33 25V44M24 27H42M24 35H42" />
        </svg>
      </NavIcon>
      <NavIcon label="发帖">
        <svg width="56" height="56" viewBox="0 0 56 56" fill="none" stroke="#666" strokeWidth="2.8">
          <path d="M36 2H9A7 7 0 0 0 2 9V47A7 7 0 0 0 9 54H45A7 7 0 0 0 52 47V16" />
          <path d="M49 1L54 5L30 38L24 42L26 35Z" fill="#666" stroke="none" />
        </svg>
      </NavIcon>
      <NavIcon label="功能">
        <svg width="52" height="56" viewBox="0 0 52 56" fill="none" stroke="#666" strokeWidth="2.8">
          <rect x="2" y="3" width="20" height="22" rx="3" />
          <path d="M38 2L49 13L38 25L28 13Z" strokeLinejoin="round" />
          <rect x="2" y="31" width="20" height="23" rx="3" />
          <rect x="28" y="31" width="22" height="23" rx="3" />
        </svg>
      </NavIcon>
      <NavIcon label="设自选">
        <svg width="56" height="56" viewBox="0 0 56 56" fill="none" stroke="#666" strokeWidth="2.8">
          <circle cx="28" cy="28" r="26.5" />
          <circle cx="19" cy="28" r="2.5" fill="#666" stroke="none" />
          <circle cx="28" cy="28" r="2.5" fill="#666" stroke="none" />
          <circle cx="37" cy="28" r="2.5" fill="#666" stroke="none" />
        </svg>
      </NavIcon>
    </div>
  </div>
);

export default function App() {
  return (
    <div className="w-[1080px] h-[2412px] bg-white flex flex-col overflow-hidden font-['Roboto','Noto_Sans_CJK_SC',sans-serif]">
      <StatusBar />
      <NavBar />
      <StatsBlock />
      <NoticeBar />
      <TabBar />
      <BollHeader />
      <MainChart />
      <MacdHeader />
      <MacdChart />
      <VolumeHeader />
      <VolumeChart />
      <DateStrip />
      <PromoBanner />
      <div className="mt-[17px] h-[2px] bg-[#dddddd]" />
      <BottomNav />
    </div>
  );
}
